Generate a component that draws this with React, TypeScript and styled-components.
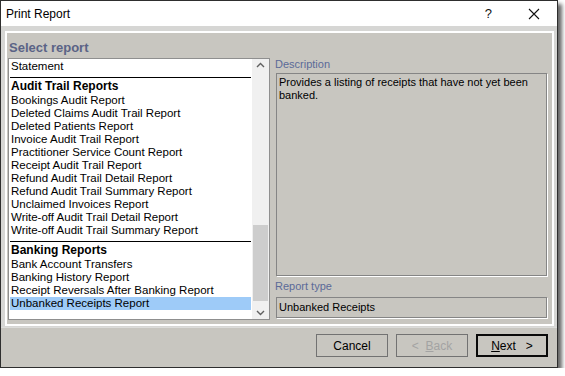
import React from "react";
import styled, { createGlobalStyle } from "styled-components";

const GlobalStyle = createGlobalStyle`
  html, body {
    margin: 0;
    padding: 0;
    background: #ffffff;
  }
  body {
    font-family: "Liberation Sans", Arial, sans-serif;
    font-size: 11px;
    color: #000;
  }
`;

type Row = { label: string; selected?: boolean };
type Group = { title: string; items: Row[] };

const groups: Group[] = [
  {
    title: "Audit Trail Reports",
    items: [
      { label: "Bookings Audit Report" },
      { label: "Deleted Claims Audit Trail Report" },
      { label: "Deleted Patients Report" },
      { label: "Invoice Audit Trail Report" },
      { label: "Practitioner Service Count Report" },
      { label: "Receipt Audit Trail Report" },
      { label: "Refund Audit Trail Detail Report" },
      { label: "Refund Audit Trail Summary Report" },
      { label: "Unclaimed Invoices Report" },
      { label: "Write-off Audit Trail Detail Report" },
      { label: "Write-off Audit Trail Summary Report" },
    ],
  },
  {
    title: "Banking Reports",
    items: [
      { label: "Bank Account Transfers" },
      { label: "Banking History Report" },
      { label: "Receipt Reversals After Banking Report" },
      { label: "Unbanked Receipts Report", selected: true },
    ],
  },
];

export default function App() {
  return (
    <>
      <GlobalStyle />
      <Window>
        <TitleBar>
          <Title>Print Report</Title>
          <TitleButtons>
            <HelpGlyph>?</HelpGlyph>
            <CloseGlyph width="12" height="12" viewBox="0 0 12 12">
              <path d="M1 1 L11 11 M11 1 L1 11" stroke="#111" strokeWidth="1.1" fill="none" />
            </CloseGlyph>
          </TitleButtons>
        </TitleBar>

        <Body>
          <Panel>
            <Heading>Select report</Heading>
            <Columns>
              <ListBox>
                <Rows>
                  <Item>Statement</Item>
                  {groups.map((g) => (
                    <GroupBlock key={g.title}>
                      <GroupTitle>{g.title}</GroupTitle>
                      {g.items.map((it) => (
                        <Item key={it.label} $selected={it.selected}>
                          {it.label}
                        </Item>
                      ))}
                    </GroupBlock>
                  ))}
                </Rows>
                <ScrollBar>
                  <Arrow viewBox="0 0 17 13">
                    <path d="M5 8 L8.5 4.5 L12 8" stroke="#606060" strokeWidth="1.4" fill="none" />
                  </Arrow>
                  <Track>
                    <Thumb />
                  </Track>
                  <Arrow viewBox="0 0 17 13">
                    <path d="M5 5 L8.5 8.5 L12 5" stroke="#606060" strokeWidth="1.4" fill="none" />
                  </Arrow>
                </ScrollBar>
              </ListBox>

              <Details>
                <FieldLabel $gap={2}>Description</FieldLabel>
                <ReadBox $grow>
                  Provides a listing of receipts that have not yet been banked.
                </ReadBox>
                <FieldLabel $gap={4}>Report type</FieldLabel>
                <ReadBox>Unbanked Receipts</ReadBox>
              </Details>
            </Columns>
          </Panel>
        </Body>

        <Footer>
          <Button>Cancel</Button>
          <Button disabled>
            {"<  "}
            <u>B</u>ack
          </Button>
          <Button $default>
            <u>N</u>
            {"ext   >"}
          </Button>
        </Footer>
      </Window>
    </>
  );
}

const Window = styled.div`
  width: 558px;
  height: 368px;
  box-sizing: border-box;
  border: 1px solid #2e2e2e;
  background: #d6d6d4;
  display: flex;
  flex-direction: column;
  box-shadow: 4px 4px 4px rgba(0, 0, 0, 0.6);
`;

const TitleBar = styled.div`
  height: 25px;
  flex: none;
  background: #ffffff;
  display: flex;
  align-items: center;
  justify-content: space-between;
  padding: 0 0 0 5px;
`;

const Title = styled.div`
  font-family: "Liberation Sans", Arial, sans-serif;
  font-size: 12px;
  color: #000;
`;

const TitleButtons = styled.div`
  display: flex;
  align-items: center;
  gap: 36px;
  padding-right: 17px;
`;

const HelpGlyph = styled.span`
  font-family: "Liberation Sans", Arial, sans-serif;
  font-size: 13px;
  color: #111;
`;

const CloseGlyph = styled.svg`
  display: block;
`;

const Body = styled.div`
  flex: none;
  padding: 5px 3px 0 4px;
`;

const Panel = styled.div`
  border: 2px solid #ffffff;
  background: #c8c6c0;
  padding: 0 4px 4px 1px;
  height: 295px;
  box-sizing: border-box;
  display: flex;
  flex-direction: column;
`;

const Heading = styled.div`
  flex: none;
  font-weight: bold;
  font-size: 13px;
  line-height: 15px;
  color: #5a6386;
  padding: 7px 0 0 1px;
  height: 18px;
`;

const Columns = styled.div`
  flex: 1;
  display: grid;
  grid-template-columns: 262px 1fr;
  column-gap: 6px;
  min-height: 0;
`;

const ListBox = styled.div`
  border: 1px solid #8f8f8f;
  background: #ffffff;
  display: flex;
  overflow: hidden;
`;

const Rows = styled.div`
  flex: 1;
  padding: 1px 1px 0 1px;
  overflow: hidden;
  font-size: 11.5px;
`;

const Item = styled.div<{ $selected?: boolean }>`
  height: 13px;
  line-height: 13px;
  padding-left: 1px;
  white-space: nowrap;
  background: ${(p) => (p.$selected ? "#9ecbf8" : "transparent")};
`;

const GroupBlock = styled.div`
  margin-top: 4px;
  border-top: 1px solid #000;
  padding-top: 2px;
`;

const GroupTitle = styled.div`
  height: 14px;
  line-height: 13px;
  padding-left: 1px;
  font-weight: bold;
  font-size: 12px;
`;

const ScrollBar = styled.div`
  width: 17px;
  background: #f0f0f0;
  display: flex;
  flex-direction: column;
`;

const Arrow = styled.svg`
  width: 17px;
  height: 13px;
  flex: none;
`;

const Track = styled.div`
  flex: 1;
  display: flex;
  flex-direction: column;
  justify-content: flex-end;
  padding: 0 1px 5px 1px;
`;

const Thumb = styled.div`
  height: 76px;
  background: #cdcdcd;
`;

const Details = styled.div`
  display: flex;
  flex-direction: column;
`;

const FieldLabel = styled.div<{ $gap: number }>`
  color: #5b6a98;
  height: 13px;
  line-height: 13px;
  margin: 0 0 ${(p) => p.$gap}px -1px;
`;

const ReadBox = styled.div<{ $grow?: boolean }>`
  border: 1px solid #858585;
  box-shadow: 1px 1px 0 #ffffff;
  background: #c8c6c0;
  padding: 2px 2px;
  line-height: 13px;
  margin: 0 1px 4px 0;
  ${(p) => (p.$grow ? "flex: 1;" : "height: 15px; line-height: 15px; padding: 2px; margin-bottom: 2px;")}
`;

const Footer = styled.div`
  flex: 1;
  margin-top: 1px;
  border-top: 1px solid #dcdcda;
  background: #c8c6c0;
  display: flex;
  justify-content: flex-end;
  align-items: flex-start;
  gap: 8px;
  padding: 6px 9px 0 0;
`;

const Button = styled.button<{ $default?: boolean }>`
  width: 72px;
  height: 23px;
  box-sizing: border-box;
  background: #c8c6c0;
  font-family: "Liberation Sans", Arial, sans-serif;
  font-size: 12px;
  color: #000;
  white-space: pre;
  padding: 0;
  border: ${(p) => (p.$default ? "2px solid #0a0a0a" : "1px solid #727272")};
  &:disabled {
    color: #a3a3a3;
  }
`;
